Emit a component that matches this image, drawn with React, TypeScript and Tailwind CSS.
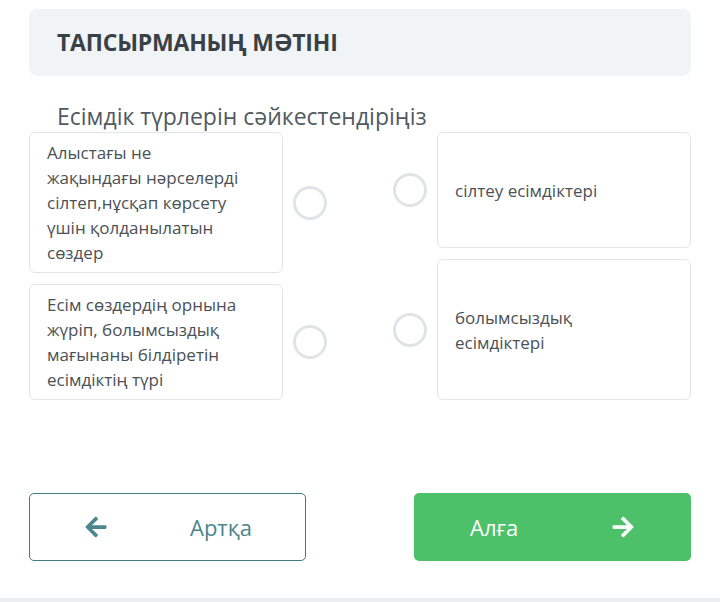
import { FaArrowLeft, FaArrowRight } from "react-icons/fa";

const font = { fontFamily: '"Open Sans", "Noto Sans", sans-serif' };

function Circle() {
    return <div className="w-[34px] h-[34px] shrink-0 rounded-full border-[3px] border-[#e1e4e6] bg-white" />;
}

function Card({ text, h, center }: { text: string[]; h: string; center?: boolean }) {
    return (
        <div
            className={`w-[254px] ${h} shrink-0 rounded-md border border-[#e2e5e7] bg-white px-[17px] py-[7px] text-[17px] leading-[25px] text-[#4b5155] flex flex-col ${center ? "justify-center" : ""}`}
        >
            {text.map((t) => (
                <span key={t}>{t}</span>
            ))}
        </div>
    );
}

export default function App() {
    return (
        <div className="w-[720px] h-[602px] bg-white relative overflow-hidden" style={font}>
            <div className="px-[29px] pt-[9px]">
                <div className="h-[67px] rounded-lg bg-[#f1f4f6] flex items-center pl-[28px]">
                    <h1 className="text-[23px] font-bold text-[#3a4146] tracking-[-0.2px]">ТАПСЫРМАНЫҢ МӘТІНІ</h1>
                </div>

                <p className="mt-[25px] pl-[28px] text-[23px] leading-[30px] text-[#515a5f]">
                    Есімдік түрлерін сәйкестендіріңіз
                </p>

                <div className="flex justify-between mt-[1px]">
                    <div className="flex flex-col gap-[11px]">
                        <div className="flex items-center gap-[10px]">
                            <Card
                                h="h-[141px]"
                                text={["Алыстағы не", "жақындағы нәрселерді", "сілтеп,нұсқап көрсету", "үшін қолданылатын", "сөздер"]}
                            />
                            <Circle />
                        </div>
                        <div className="flex items-center gap-[10px]">
                            <Card
                                h="h-[116px]"
                                text={["Есім сөздердің орнына", "жүріп, болымсыздық", "мағынаны білдіретін", "есімдіктің түрі"]}
                            />
                            <Circle />
                        </div>
                    </div>
                    <div className="flex flex-col gap-[11px]">
                        <div className="flex items-center gap-[10px]">
                            <Circle />
                            <Card h="h-[116px]" center text={["сілтеу есімдіктері"]} />
                        </div>
                        <div className="flex items-center gap-[10px]">
                            <Circle />
                            <Card h="h-[141px]" center text={["болымсыздық", "есімдіктері"]} />
                        </div>
                    </div>
                </div>

                <div className="flex justify-between mt-[93px]">
                    <button className="w-[277px] h-[68px] rounded-[5px] border border-[#3f7b80] bg-white flex items-center pl-[54px] text-[#4b878c]">
                        <FaArrowLeft className="w-[24px] h-[24px]" />
                        <span className="ml-[82px] text-[22px]">Артқа</span>
                    </button>
                    <button className="w-[277px] h-[68px] rounded-[5px] bg-[#4dc169] flex items-center pl-[56px] text-white">
                        <span className="text-[22px]">Алға</span>
                        <FaArrowRight className="w-[24px] h-[24px] ml-[93px]" />
                    </button>
                </div>
            </div>
            <div className="absolute bottom-0 left-0 right-0 h-[4px] bg-[#eceff1]" />
        </div>
    );
}
